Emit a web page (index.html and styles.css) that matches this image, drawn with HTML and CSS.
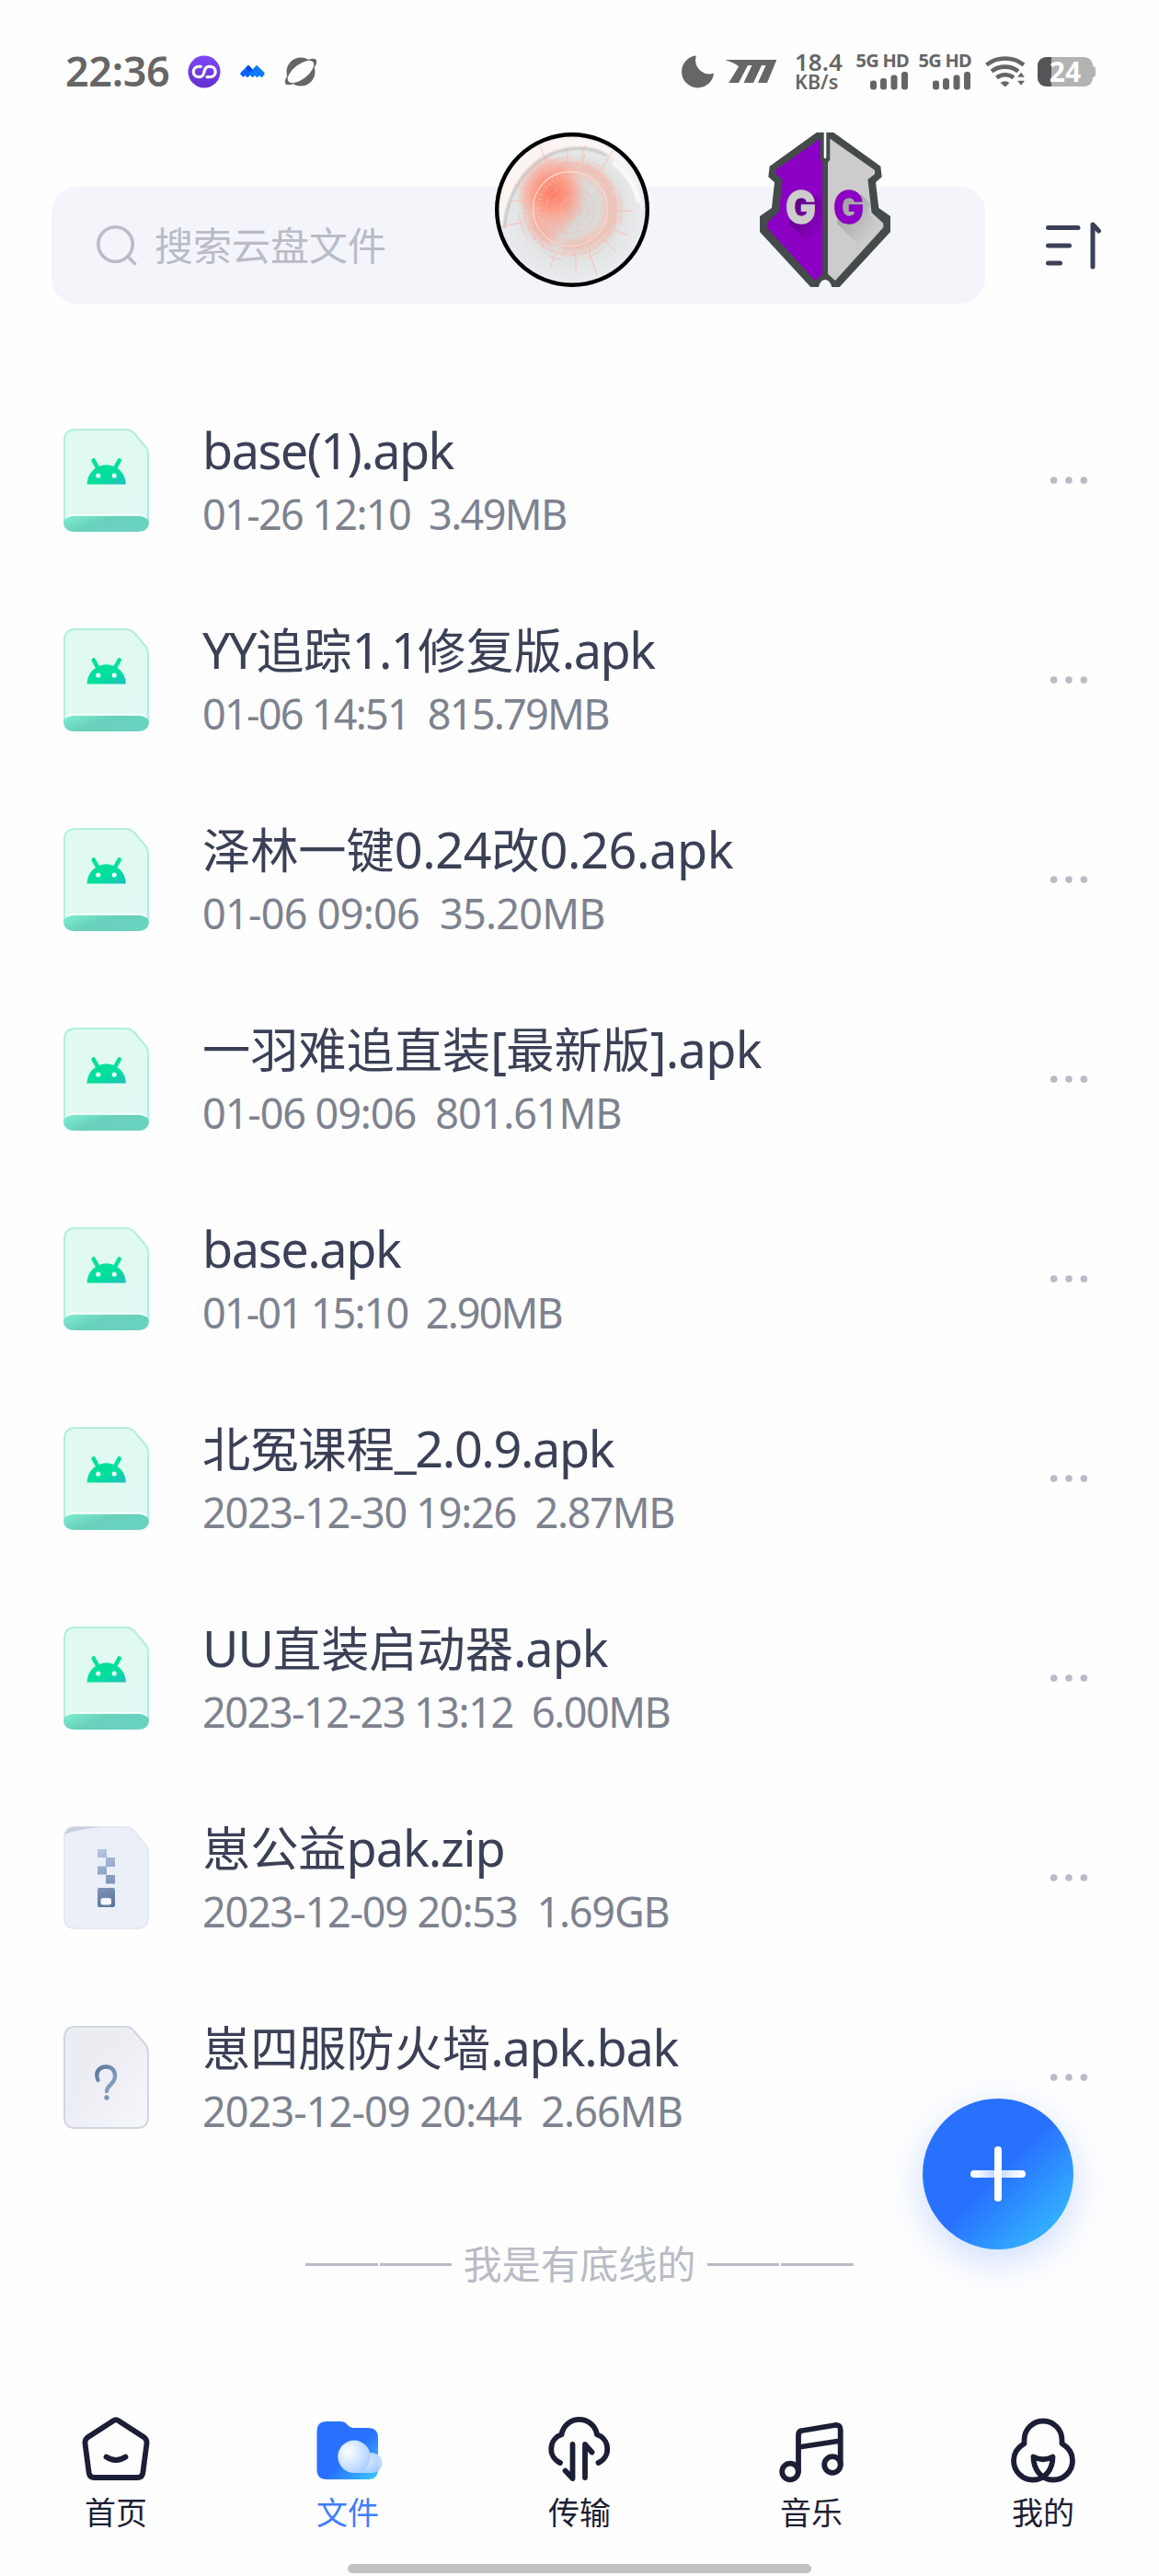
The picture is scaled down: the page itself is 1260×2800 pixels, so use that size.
FILE: index.html
```html
<!DOCTYPE html>
<html lang="zh-CN">
<head>
<meta charset="utf-8">
<title>云盘文件</title>
<link rel="stylesheet" href="styles.css">
</head>
<body>
<svg class="defs" aria-hidden="true">
  <defs>
    <linearGradient id="apkPaper" x1="0" y1="0" x2="1" y2="1"><stop offset=".6" stop-color="#e0faf1"/><stop offset="1" stop-color="#e0f7f6"/></linearGradient>
    <linearGradient id="apkBase" x1="0" y1="0" x2="1" y2=".5"><stop offset="0" stop-color="#80efd2"/><stop offset=".5" stop-color="#68d0bb"/><stop offset="1" stop-color="#6ad3c0"/></linearGradient>
    <linearGradient id="droid" x1="0" y1="0" x2="1" y2="1"><stop offset=".55" stop-color="#04df9c"/><stop offset="1" stop-color="#22bdc0"/></linearGradient>
    <linearGradient id="zipInk" gradientUnits="userSpaceOnUse" x1="36" y1="25" x2="57" y2="88"><stop offset="0" stop-color="#b9c8e4"/><stop offset="1" stop-color="#5a7299"/></linearGradient>
    <linearGradient id="bakPaper" x1="0" y1="0" x2="1" y2="1"><stop offset=".4" stop-color="#ebedf3"/><stop offset="1" stop-color="#f6f7fb"/></linearGradient>
    <linearGradient id="bakInk" x1="0" y1="0" x2="1" y2="1"><stop offset="0" stop-color="#5b769d"/><stop offset="1" stop-color="#8fa5c8"/></linearGradient>
    <symbol id="apk" viewBox="0 0 93 112">
      <path d="M13 1H68Q73 1 77 5L88 18Q92 22 92 28V99Q92 111 80 111H13Q1 111 1 99V13Q1 1 13 1Z" fill="url(#apkPaper)" stroke="#b2efdc" stroke-width="2"/>
      <path d="M10 95H83Q93 96 93 103Q92 112 80 112H13Q1 112 0 103Q0 96 10 95Z" fill="url(#apkBase)"/>
      <path d="M3 97Q5 93.500 12 93.500H81Q88 93.500 90 97" fill="none" stroke="#f4fffb" stroke-width="1.500"/>
      <path d="M25.500 60.500A21.200 21.200 0 0 1 67.900 60.500Z" fill="url(#droid)"/>
      <path d="M32.700 34.500L38 44M60.700 34.500L55.400 44" stroke="#04df9c" stroke-width="4.600" stroke-linecap="round"/>
      <circle cx="37.800" cy="51" r="2.600" fill="#e6fbf4"/><circle cx="55.200" cy="51" r="2.600" fill="#e6fbf4"/>
    </symbol>
    <symbol id="zip" viewBox="0 0 93 112">
      <path d="M13 1H68Q73 1 77 6L88 19Q92 23 92 29V99Q92 111 80 111H13Q1 111 1 99V13Q1 1 13 1Z" fill="#eaeff8" stroke="#e3e9f3" stroke-width="2"/>
      <path d="M1 9Q3 .500 13 .500H42Q16 3 1 9Z" fill="#c7d0da"/>
      <path fill="url(#zipInk)" d="M37 25h10v9h-10zM46 34h10v10h-10zM37 43.500h10v9h-10zM46 53h10v9.500h-10zM39 67H54Q56 67 56 69V86Q56 88 54 88H39Q37 88 37 86V69Q37 67 39 67Z"/>
      <rect x="40.500" y="78" width="11.500" height="7.500" rx="2.500" fill="#f4f7fc"/>
    </symbol>
    <symbol id="bak" viewBox="0 0 93 112">
      <path d="M13 1H68Q73 1 77 6L88 19Q92 23 92 29V99Q92 111 80 111H13Q1 111 1 99V13Q1 1 13 1Z" fill="url(#bakPaper)" stroke="#d0d6e1" stroke-width="2"/>
      <path d="M37.500 59C34 50 39 44.500 46.500 44.500C53 44.500 56.500 49 56 56C55.300 62.500 47 65.500 47 71" fill="none" stroke="url(#bakInk)" stroke-width="4.400" stroke-linecap="round"/>
      <circle cx="47" cy="78" r="2.700" fill="#7d95bc"/>
    </symbol>
    <symbol id="more" viewBox="0 0 40 10"><g fill="#b9bbc6"><circle cx="3.700" cy="5" r="3.800"/><circle cx="20" cy="5" r="3.800"/><circle cx="36.300" cy="5" r="3.800"/></g></symbol>
    <symbol id="sim" viewBox="0 0 42 20"><g fill="#666"><rect x="0" y="9.500" width="7" height="10" rx="3"/><rect x="11" y="7" width="7" height="12.500" rx="3"/><rect x="22.500" y="3.500" width="7" height="16" rx="3"/><rect x="34" y="0" width="7" height="19.500" rx="3"/></g></symbol>
  </defs>
</svg>

<main class="screen">
  <header class="status">
    <div class="status-side">
      <span class="clock">22:36</span>
      <svg width="36" height="36" viewBox="0 0 36 36"><defs><linearGradient id="lp" x2="0" y2="1"><stop stop-color="#7d48f7"/><stop offset="1" stop-color="#6430cf"/></linearGradient></defs><circle cx="18" cy="18" r="17.500" fill="url(#lp)"/><path d="M14.300 12.300H12A5.700 5.700 0 0 0 12 23.700H13C20.500 23.700 15.500 12.300 23 12.300H24.500A5.700 5.700 0 0 1 24.500 23.700H21" fill="none" stroke="#fff" stroke-width="3.200" stroke-linecap="round"/></svg>
      <svg class="ic-peaks" width="27" height="15" viewBox="0 0 27 15"><path d="M1 8.500L9 .700L15 7L9 13.500Q8 14.500 7 13.500L5.500 12L4 13.500H3L0 10.500Z" fill="#0b62ff"/><path d="M9 .700L15 7L12 10L6 4Z" fill="#0646d8"/><path d="M10 9L18 .700L26.500 9V11L24 14H23L21 12L19 14H18L16 12L14 14H13L10.500 11Z" fill="#0a7bff"/></svg>
      <svg class="ic-planet" width="36" height="32" viewBox="0 0 36 32"><circle cx="18" cy="16" r="15.500" fill="#666"/><g transform="rotate(-38 18 16)"><ellipse cx="18" cy="16" rx="21" ry="7.500" fill="#666"/><ellipse cx="18" cy="16" rx="17" ry="7.800" fill="#fefefe"/></g></svg>
    </div>
    <div class="status-side">
      <svg width="36" height="36" viewBox="0 0 36 36"><path d="M16 .500A17.500 17.500 0 1 0 35 19.500A15 15 0 0 1 16 .500Z" fill="#666"/></svg>
      <svg class="ic-bike" width="57" height="26" viewBox="0 0 57 26"><path d="M0 0H56.300L46 25H36L44.500 6H40L31 25H20.500L29.500 6H25L15 25H4.300L15 7.500Q13 4 0 0Z" fill="#666"/></svg>
      <div class="speed">18.4<br><small>KB/s</small></div>
      <div class="sim"><span>5G HD</span><svg width="42" height="20"><use href="#sim"/></svg></div>
      <div class="sim"><span>5G HD</span><svg width="42" height="20"><use href="#sim"/></svg></div>
      <svg class="ic-wifi" width="44" height="34" viewBox="0 0 44 34"><g fill="none" stroke="#666" stroke-width="4.600"><path d="M1.500 9.500A33 33 0 0 1 42 9.500"/><path d="M7 16.500A24 24 0 0 1 36 16.500"/><path d="M12.500 23.500A15 15 0 0 1 31 23.500"/></g><path d="M16.500 29Q21.500 25.500 26.500 29L21.800 33.500Z" fill="#666"/><path d="M33.500 23.500L39 16.500L44.500 23.500ZM33.500 26H44.500L39 33Z" fill="#666" stroke="#fefefe" stroke-width="1.500"/></svg>
      <div class="battery"><span>24</span></div>
    </div>
  </header>

  <section class="search-row">
    <div class="search">
      <svg width="44" height="44" viewBox="0 0 44 44" fill="none" stroke="#b9bbc6" stroke-width="3.600" stroke-linecap="round"><circle cx="20.500" cy="20.500" r="18.700"/><path d="M35 35L41.500 41.500"/></svg>
      <span>搜索云盘文件</span>
    </div>
    <svg class="sort" width="62" height="54" viewBox="0 0 62 54" fill="none" stroke="#3b4056" stroke-width="5" stroke-linecap="round" stroke-linejoin="round"><path d="M3.500 7.500H36M3.500 27H26.500M3.500 46H16.500M52 50V4L58.500 11"/></svg>
  </section>

  <ul class="files">
    <li class="file f1"><svg class="thumb"><use href="#apk"/></svg><div class="info"><div class="name">base(1).apk</div><div class="meta">01-26 12:10  3.49MB</div></div><svg class="more"><use href="#more"/></svg></li>
    <li class="file f2"><svg class="thumb"><use href="#apk"/></svg><div class="info"><div class="name">YY<b>追踪</b>1.1<b>修复版</b>.apk</div><div class="meta">01-06 14:51  815.79MB</div></div><svg class="more"><use href="#more"/></svg></li>
    <li class="file f3"><svg class="thumb"><use href="#apk"/></svg><div class="info"><div class="name"><b>泽林一键</b>0.24<b>改</b>0.26.apk</div><div class="meta">01-06 09:06  35.20MB</div></div><svg class="more"><use href="#more"/></svg></li>
    <li class="file f4"><svg class="thumb"><use href="#apk"/></svg><div class="info"><div class="name"><b>一羽难追直装</b>[<b>最新版</b>].apk</div><div class="meta">01-06 09:06  801.61MB</div></div><svg class="more"><use href="#more"/></svg></li>
    <li class="file f5"><svg class="thumb"><use href="#apk"/></svg><div class="info"><div class="name">base.apk</div><div class="meta">01-01 15:10  2.90MB</div></div><svg class="more"><use href="#more"/></svg></li>
    <li class="file f6"><svg class="thumb"><use href="#apk"/></svg><div class="info"><div class="name"><b>北冤课程</b>_2.0.9.apk</div><div class="meta">2023-12-30 19:26  2.87MB</div></div><svg class="more"><use href="#more"/></svg></li>
    <li class="file f7"><svg class="thumb"><use href="#apk"/></svg><div class="info"><div class="name">UU<b>直装启动器</b>.apk</div><div class="meta">2023-12-23 13:12  6.00MB</div></div><svg class="more"><use href="#more"/></svg></li>
    <li class="file f8"><svg class="thumb"><use href="#zip"/></svg><div class="info"><div class="name"><b>崽公益</b>pak.zip</div><div class="meta">2023-12-09 20:53  1.69GB</div></div><svg class="more"><use href="#more"/></svg></li>
    <li class="file f9"><svg class="thumb"><use href="#bak"/></svg><div class="info"><div class="name"><b>崽四服防火墙</b>.apk.bak</div><div class="meta">2023-12-09 20:44  2.66MB</div></div><svg class="more"><use href="#more"/></svg></li>
  </ul>

  <div class="end"><i></i><i></i><span>我是有底线的</span><i></i><i></i></div>

  <nav class="tabs">
    <a class="tab"><svg width="80" height="80" viewBox="0 0 80 80" class="line"><path d="M36 10Q40 6.500 44 10L71 27.500Q74 30 73.500 34L69.300 66Q68.500 71 63.500 71H16.500Q11.500 71 10.700 66L6.500 34Q6 30 9 27.500Z"/><path d="M29.500 48.500Q40 55.500 50.500 48.500"/></svg><span>首页</span></a>
    <a class="tab active"><svg width="80" height="80" viewBox="0 0 80 80"><defs><linearGradient id="fold" x1="0" y1="0" x2="1" y2="1"><stop offset=".55" stop-color="#2871fe"/><stop offset="1" stop-color="#3ccbff"/></linearGradient><radialGradient id="ball" cx=".32" cy=".35" r=".75"><stop stop-color="#fff"/><stop offset="1" stop-color="#a9cdff"/></radialGradient></defs><path d="M17 10H32Q37 10 40 14Q42.500 17 46 17H62Q73 17 73 28V62Q73 73 62 73H17Q6.500 73 6.500 62V21Q6.500 10 17 10Z" fill="url(#fold)"/><path d="M47 66H66.500A11 11 0 1 0 56 52Z" fill="url(#ball)" opacity=".9"/><circle cx="47" cy="48.300" r="17.700" fill="url(#ball)"/></svg><span>文件</span></a>
    <a class="tab"><svg width="80" height="80" viewBox="0 0 80 80" class="line"><path d="M19 55A16.500 16.500 0 0 1 20.500 24.300A19.500 19.500 0 0 1 59 24.300A16.500 16.500 0 0 1 60.500 55"/><path d="M32.500 35V72L24.500 63.500M46 71V35L53.500 43.500"/></svg><span>传输</span></a>
    <a class="tab"><svg width="80" height="80" viewBox="0 0 80 80" class="line"><circle cx="17" cy="64.500" r="8.800"/><circle cx="63" cy="57" r="8.800"/><path d="M26 64.500V25Q26 20.500 30 20L66 14Q71.700 13.500 71.700 19V57M26 38L71.700 31"/></svg><span>音乐</span></a>
    <a class="tab"><svg width="80" height="80" viewBox="0 0 80 80" class="line"><path d="M19.500 34V30A20.500 20.500 0 0 1 60.500 30V34C67 38 72 44 72 52.500A21 21 0 0 1 51 73.500C38 73.500 29.500 62 29.500 48.500Q40 54 50.500 48.500C50.500 62 42 73.500 29 73.500A21 21 0 0 1 8 52.500C8 44 13 38 19.500 34Z"/></svg><span>我的</span></a>
  </nav>
  <div class="home-bar"></div>

  <button class="fab" aria-label="添加"><svg width="64" height="64" viewBox="0 0 64 64"><defs><linearGradient id="pl" gradientUnits="userSpaceOnUse" x1="0" x2="64" y1="0" y2="0"><stop offset=".1" stop-color="#fff"/><stop offset=".45" stop-color="#bcd6ff"/><stop offset=".9" stop-color="#fff"/></linearGradient></defs><rect x="2" y="28" width="60" height="8" rx="4" fill="url(#pl)"/><rect x="28" y="2" width="8" height="60" rx="4" fill="#fff"/></svg></button>

  <svg class="orb" width="168" height="168" viewBox="0 0 168 168">
    <defs>
      <radialGradient id="og" cx=".5" cy=".5" r=".52"><stop stop-color="#d6d4d3"/><stop offset=".5" stop-color="#dddfde"/><stop offset="1" stop-color="#ecedf1"/></radialGradient>
      <radialGradient id="rg"><stop stop-color="#ff7c64"/><stop offset=".45" stop-color="#ff927b" stop-opacity=".8"/><stop offset="1" stop-color="#ffb09d" stop-opacity="0"/></radialGradient>
      <linearGradient id="rim" x1="0" x2="1" y1="0" y2=".6"><stop stop-color="#fff3ee"/><stop offset="1" stop-color="#fff" stop-opacity=".5"/></linearGradient>
      <filter id="soft" x="-20%" y="-20%" width="140%" height="140%"><feGaussianBlur stdDeviation="4"/></filter>
      <filter id="edge"><feGaussianBlur stdDeviation="1.300"/></filter>
    </defs>
    <circle cx="84" cy="84" r="81.500" fill="url(#og)"/>
    <g filter="url(#edge)">
      <path d="M8 108A76 76 0 0 1 84 6A76 76 0 0 1 160 90C152 40 124 17 94 17C45 17 14 55 8 108Z" fill="url(#rim)"/>
      <path d="M10 104C15 52 48 17 92 17Q108 17 122 25" fill="none" stroke="#aeacac" stroke-width="2.500" opacity=".75"/>
      <path d="M128 32Q150 50 156 76" fill="none" stroke="#fff" stroke-width="3"/>
    </g>
    <g filter="url(#soft)">
      <ellipse cx="60" cy="72" rx="28" ry="42" fill="#ff9a85" opacity=".42"/>
      <path d="M66 41Q98 32 118 54Q134 78 122 104Q102 126 72 124" fill="none" stroke="#ffa18d" stroke-width="13" opacity=".5"/>
      <path d="M42 92Q48 116 66 118" fill="none" stroke="#ff9580" stroke-width="13" opacity=".45"/>
    </g>
    <circle cx="62" cy="66" r="40" fill="url(#rg)"/>
    <g fill="none" stroke="#ffb1a1">
      <circle cx="82" cy="83" r="40.500" stroke="#ffd6ca" stroke-width="1.300"/>
      <g opacity=".75">
        <circle cx="82" cy="83" r="35" stroke-dasharray="1 4" stroke-width="3" stroke="#ffc4b6"/><circle cx="82" cy="83" r="26" stroke-dasharray="10 4"/><circle cx="82" cy="83" r="20" stroke-dasharray="1.500 3"/><circle cx="82" cy="83" r="10.500" stroke-dasharray="3 2" stroke-width="2"/>
        <circle cx="82" cy="83" r="50" stroke-dasharray="5 2 2 3" stroke-width="3" opacity=".6"/><circle cx="82" cy="83" r="56" stroke-dasharray="16 30 28 22" opacity=".8"/>
        <path d="M49 14L57 36M128 20L116 40M98 24L94 37L115 45M22 56L35 62M8 102L34 97M16 74L32 75M134 86L151 85M130 106L144 112M118 116L132 130M102 128L111 155M88 130V151M66 130L60 147M79 16V34M98 14L94 28"/>
      </g>
    </g>
    <circle cx="84" cy="84" r="81.800" fill="none" stroke="#000" stroke-width="4.400"/>
  </svg>

  <svg class="shield" width="142" height="168" viewBox="0 0 142 168">
    <defs><linearGradient id="sh" x1="0" y1="0" x2="1" y2="1"><stop stop-color="#000" stop-opacity=".42"/><stop offset=".8" stop-color="#000" stop-opacity="0"/></linearGradient></defs>
    <path d="M61.700 0H80.300L131.300 36.700L132.700 48.300L126 54.300L129.300 82L142 91V108L86.700 168H78.300Q76 160 71 160Q66 160 64 168H55.300L0 108V91L13 82L16 54.300L9.300 48.300L10.700 36.700Z" fill="#454b4a"/>
    <path d="M65.700 6.700V29.500L68.300 32.700V153.700L60 161L7.700 103.300V98.700L21 86L24.700 51L17 45.300V41Z" fill="#8b00c3"/>
    <path d="M76.300 6.700V29.500L74 32.700V153.700L82 161L134.300 103.300V98.700L121.500 87L117.500 51L125 45.300V41Z" fill="#ccc"/>
    <path d="M69.700 0H72.300V27A1.300 1.300 0 0 1 69.700 27Z" fill="#fff"/>
    <path d="M38 68H58L68 76V123L53 120L32 99Z" fill="url(#sh)"/><path d="M90 68H111L120 77L118 88L128 100L108 123L84 99Z" fill="url(#sh)" opacity=".6"/>
    <text x="28" y="98.500" textLength="33" lengthAdjust="spacingAndGlyphs" class="g" fill="#ccc" stroke="#ccc">G</text>
    <text x="80" y="98.500" textLength="33" lengthAdjust="spacingAndGlyphs" class="g" fill="#8b00c3" stroke="#8b00c3">G</text>
  </svg>
</main>
</body>
</html>
```
FILE: styles.css
```css
* { box-sizing: border-box; }
body {
  margin: 0;
  background: #fefefe;
  font-family: "Noto Sans", "Noto Sans CJK SC", sans-serif;
  color: #3b4056;
}
.defs { position: absolute; width: 0; height: 0; }
svg { display: block; flex: none; }
.screen {
  position: relative;
  width: 1260px;
  height: 2800px;
  display: flex;
  flex-direction: column;
  overflow: hidden;
}

.status {
  height: 155px;
  padding: 0 72px 0 71px;
  display: flex;
  justify-content: space-between;
  align-items: center;
  color: #666;
}
.status-side { display: flex; align-items: center; }
.clock { font-size: 45px; font-weight: 600; line-height: 50px; width: 133px; padding-bottom: 2px; letter-spacing: -.4px; }
.ic-peaks { margin-left: 21px; }
.ic-planet { margin-left: 21px; }
.ic-bike { margin-left: 11px; }
.speed { margin-left: 19px; width: 68px; font-size: 26px; font-weight: 600; line-height: 20px; }
.speed small { font-size: 21.500px; }
.sim { width: 56px; margin-right: 12px; display: flex; flex-direction: column; align-items: flex-end; gap: 4px; font-size: 20px; font-weight: 700; line-height: 16px; letter-spacing: -.7px; white-space: nowrap; }
.ic-wifi { margin-left: 3px; overflow: visible; }
.battery {
  position: relative;
  margin-left: 13px;
  width: 60px;
  height: 32px;
  border-radius: 9px;
  background: linear-gradient(to right, #555 14.500px, #b3b3b3 14.500px);
  color: #fff;
  font-size: 30px;
  font-weight: 700;
  line-height: 32px;
  text-align: center;
}
.battery::after { content: ""; position: absolute; right: -3px; top: 10px; width: 4px; height: 12px; border-radius: 0 3px 3px 0; background: #b3b3b3; }

.search-row { height: 258px; padding: 48px 62px 0 56px; display: flex; justify-content: space-between; align-items: flex-start; }
.search {
  width: 1015px;
  height: 127px;
  border-radius: 27px;
  background: #f4f5fb;
  display: flex;
  align-items: center;
  gap: 19px;
  padding-left: 49px;
  color: #b9bbc6;
  font: 42px/60px "Noto Sans CJK SC", sans-serif;
}
.search span { padding-bottom: 4px; }
.sort { margin-top: 37px; }

.files { list-style: none; margin: 0; padding: 0; }
.file { height: 217px; display: flex; align-items: center; padding: 0 78px 0 69px; }
.thumb { width: 93px; height: 112px; }
.info { flex: 1; align-self: flex-start; padding: 41px 0 0 58px; white-space: pre; }
.name { font-size: 54px; line-height: 70px; height: 70px; }
.name b { font: 52.200px/1 "Noto Sans CJK SC", sans-serif; letter-spacing: 0; }
.meta { margin-top: 5px; font-size: 45px; line-height: 60px; color: #7d828f; }
.more { width: 40px; height: 10px; }

.f1 .name { letter-spacing: -1.550px; } .f1 .meta { letter-spacing: -1.650px; }
.f2 .name { letter-spacing: -1.500px; } .f2 .meta { letter-spacing: -1.750px; }
.f3 .name { letter-spacing: -.400px; }  .f3 .meta { letter-spacing: -.740px; }
.f4 .name { letter-spacing: -.700px; }  .f4 .meta { letter-spacing: -1.100px; }
.f5 .name { letter-spacing: -1.400px; } .f5 .meta { letter-spacing: -1.900px; }
.f6 .name { letter-spacing: -1.400px; } .f6 .meta { letter-spacing: -1.300px; }
.f7 .name { letter-spacing: -1px; }     .f7 .meta { letter-spacing: -1.500px; }
.f8 .name { letter-spacing: -1.050px; } .f8 .meta { letter-spacing: -1.200px; }
.f9 .name { letter-spacing: -1.200px; } .f9 .meta { letter-spacing: -.930px; }

.end { margin-top: 65px; height: 60px; display: flex; align-items: center; justify-content: center; gap: 2px; color: #b9bbc6; }
.end i { width: 78.500px; height: 3px; background: #b9bbc6; }
.end span { margin: 0 10px; padding-bottom: 4px; font: 42.200px/60px "Noto Sans CJK SC", sans-serif; }

.tabs { margin-top: 131px; display: grid; grid-template-columns: repeat(5, 1fr); }
.tab { display: flex; flex-direction: column; align-items: center; color: #1b1e34; font: 34px/40px "Noto Sans CJK SC", sans-serif; }
.tab span { margin-top: 8px; }
.tab.active { color: #3f7efb; }
.line { fill: none; stroke: #1b1e34; stroke-width: 5.800px; stroke-linecap: round; stroke-linejoin: round; }
.home-bar { width: 504px; height: 10px; border-radius: 5px; background: #c2c2c2; margin: 37px auto 0; }

.fab {
  position: absolute;
  left: 1003px;
  top: 2281px;
  width: 164px;
  height: 164px;
  border: 0;
  padding: 0;
  border-radius: 50%;
  display: grid;
  place-items: center;
  background: linear-gradient(135deg, #2871ff 50%, #33b4ff 88%);
  box-shadow: 0 12px 42px rgba(40, 113, 255, .24);
}
.orb { position: absolute; left: 538px; top: 144px; }
.shield { position: absolute; left: 826px; top: 144px; }
.g { font: 800 50px Inter, sans-serif; stroke-width: 1.500px; }
```
